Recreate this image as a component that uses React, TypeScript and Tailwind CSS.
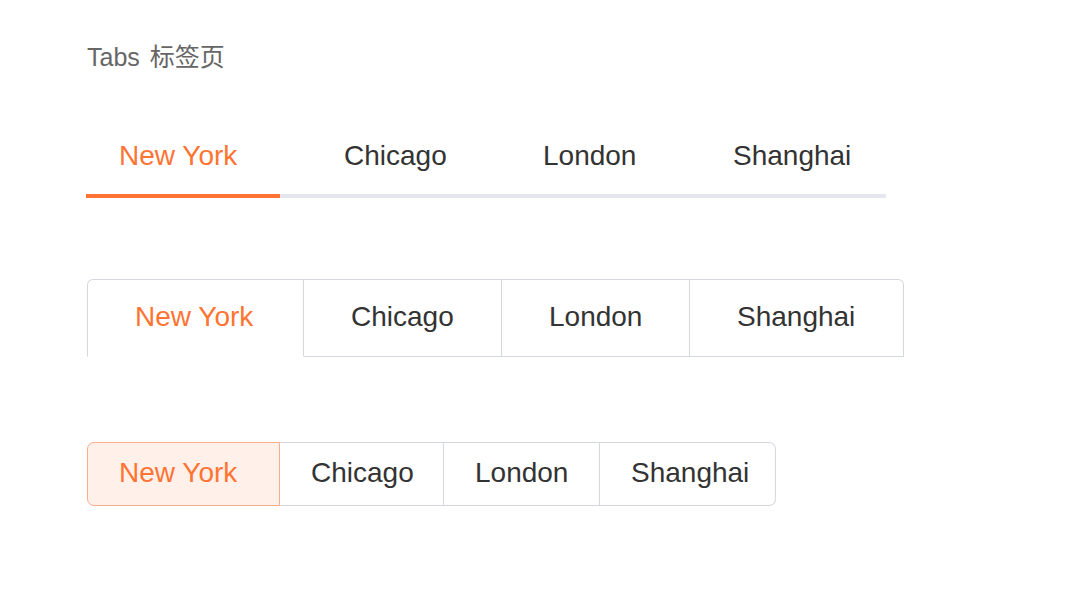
import React from "react";

const cities = ["New York", "Chicago", "London", "Shanghai"];

export default function App() {
  const line1 = [
    { w: "w-[194px]", pl: "pl-[33px]" },
    { w: "w-[206px]", pl: "pl-[64px]" },
    { w: "w-[200px]", pl: "pl-[57px]" },
    { w: "w-[200px]", pl: "pl-[47px]" },
  ];
  const card = ["w-[217px] border-l rounded-tl-[6px]", "w-[198px]", "w-[188px]", "w-[214px] rounded-tr-[6px]"];
  const seg = ["w-[193px] rounded-l-[7px]", "w-[164px]", "w-[156px]", "w-[176px] rounded-r-[7px]"];
  return (
    <div
      className="min-h-[606px] w-[1068px] bg-white pl-[86px] pt-[45px]"
      style={{ fontFamily: '"Liberation Sans", "Noto Sans CJK SC", sans-serif' }}
    >
      <div className="pl-px text-[25px] leading-[25px] text-[#666666]">
        Tabs <span className="ml-[3px]">标签页</span>
      </div>

      {/* line tabs */}
      <div className="mt-[72px] flex w-[800px]">
        {cities.map((c, i) => (
          <div
            key={c}
            className={`${line1[i].w} ${line1[i].pl} border-b-4 pb-[24px] text-[28px] leading-[28px] ${
              i === 0 ? "border-[#ff7433] text-[#ff7433]" : "border-[#e6e7ee] text-[#333333]"
            }`}
          >
            {c}
          </div>
        ))}
      </div>

      {/* card tabs */}
      <div className="ml-px mt-[81px] flex">
        {cities.map((c, i) => (
          <div
            key={c}
            className={`${card[i]} border-t border-r border-[#d5d8df] pl-[47px] pt-[23px] pb-[25px] text-[28px] leading-[28px] ${
              i === 0 ? "border-b border-b-white text-[#ff7433]" : "border-b text-[#333333]"
            }`}
          >
            {c}
          </div>
        ))}
      </div>

      {/* segmented tabs */}
      <div className="ml-px mt-[85px] flex">
        {cities.map((c, i) => (
          <div
            key={c}
            className={`${seg[i]} pl-[31px] pt-[16px] pb-[18px] text-[28px] leading-[28px] ${
              i === 0
                ? "border border-[#f8ae8a] bg-[#fff0e9] text-[#ff7433]"
                : "border-t border-r border-b border-[#d5d8df] text-[#333333]"
            }`}
          >
            {c}
          </div>
        ))}
      </div>
    </div>
  );
}
